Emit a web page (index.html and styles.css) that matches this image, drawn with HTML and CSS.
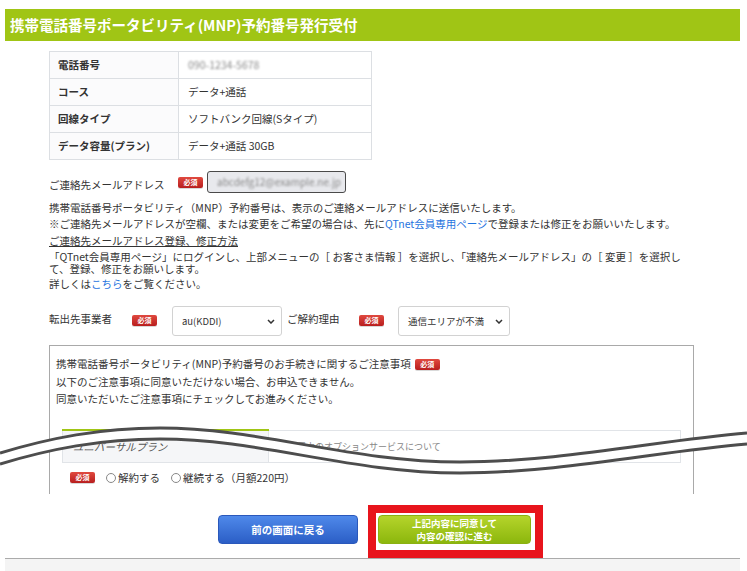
FILE: index.html
```html
<!DOCTYPE html>
<html lang="ja">
<head>
<meta charset="utf-8">
<title>携帯電話番号ポータビリティ(MNP)予約番号発行受付</title>
<link rel="stylesheet" href="styles.css">
</head>
<body>
<div class="page">
  <h1 class="titlebar">携帯電話番号ポータビリティ(MNP)予約番号発行受付</h1>
  <div class="content">
    <table class="info">
      <tr><th>電話番号</th><td><span class="blur">090-1234-5678</span></td></tr>
      <tr><th>コース</th><td>データ+通話</td></tr>
      <tr><th>回線タイプ</th><td>ソフトバンク回線(Sタイプ)</td></tr>
      <tr><th>データ容量(プラン)</th><td>データ+通話 30GB</td></tr>
    </table>

    <div class="email-row">
      <span class="email-label">ご連絡先メールアドレス</span>
      <span class="badge">必須</span>
      <div class="email-input"><span class="blur">abcdefg12@example.ne.jp</span></div>
    </div>

    <div class="note">
      <div class="note-line">携帯電話番号ポータビリティ（MNP）予約番号は、表示のご連絡メールアドレスに送信いたします。</div>
      <div class="note-line">※ご連絡先メールアドレスが空欄、または変更をご希望の場合は、先に<a class="link">QTnet会員専用ページ</a>で登録または修正をお願いいたします。</div>
    </div>

    <div class="howto">
      <div class="howto-title">ご連絡先メールアドレス登録、修正方法</div>
      <div class="howto-line">「QTnet会員専用ページ」にログインし、上部メニューの［ お客さま情報 ］を選択し、「連絡先メールアドレス」の［ 変更 ］を選択して、登録、修正をお願いします。</div>
      <div class="howto-line">詳しくは<a class="link">こちら</a>をご覧ください。</div>
    </div>

    <div class="select-row">
      <span class="field-label first">転出先事業者</span>
      <span class="badge">必須</span>
      <div class="select s1"><span>au(KDDI)</span><svg class="chev" viewBox="0 0 8 5"><path d="M1 1l3 3 3-3"/></svg></div>
      <span class="field-label second">ご解約理由</span>
      <span class="badge">必須</span>
      <div class="select s2"><span>通信エリアが不満</span><svg class="chev" viewBox="0 0 8 5"><path d="M1 1l3 3 3-3"/></svg></div>
    </div>

    <section class="notice">
      <p class="notice-title">携帯電話番号ポータビリティ(MNP)予約番号のお手続きに関するご注意事項<span class="badge">必須</span></p>
      <p class="notice-line">以下のご注意事項に同意いただけない場合、お申込できません。</p>
      <p class="notice-line">同意いただいたご注意事項にチェックしてお進みください。</p>
      <table class="plan">
        <tr><th>ユニバーサルプラン</th><td>ご利用中のオプションサービスについて</td></tr>
      </table>
      <div class="radios">
        <span class="badge">必須</span>
        <label class="radio"><span class="circle"></span>解約する</label>
        <label class="radio"><span class="circle"></span>継続する（月額220円）</label>
      </div>
    </section>

    <div class="buttons">
      <a class="btn btn-back">前の画面に戻る</a>
      <a class="btn btn-next">上記内容に同意して<br>内容の確認に進む</a>
    </div>
  </div>
  <div class="footer"></div>

  <svg class="wave" viewBox="0 0 747 571" width="747" height="571">
    <path class="wave-fill" d="M0,458.5 C50,443.5 100,433.5 160,433.5 C260,433.5 350,467.5 460,467.5 C560,467.5 660,445.5 747,438.5"/>
    <path class="wave-line" d="M0,453 C50,438 100,428 160,428 C260,428 350,462 460,462 C560,462 660,440 747,433"/>
    <path class="wave-line" d="M0,464 C50,449 100,439 160,439 C260,439 350,473 460,473 C560,473 660,451 747,444"/>
  </svg>
</div>
</body>
</html>
```

FILE: styles.css
```css
* { box-sizing: border-box; }

html, body {
  margin: 0;
  padding: 0;
  background: #fff;
}

body {
  font-family: "Noto Sans CJK JP", "Noto Sans", sans-serif;
  font-size: 10.5px;
  color: #333;
}

.page {
  position: relative;
  width: 747px;
  height: 571px;
  overflow: hidden;
}

.titlebar {
  margin: 9px 7px 0 5px;
  height: 32px;
  padding-left: 5px;
  background: #a0c515;
  color: #fff;
  font-size: 14.5px;
  font-weight: bold;
  line-height: 32px;
}

.content {
  padding-left: 49px;
  width: 700px;
}

/* info table */
.info {
  margin-top: 10px;
  border-collapse: collapse;
  width: 323px;
}
.info th,
.info td {
  border: 1px solid #dcdfe3;
  height: 27px;
  padding: 0 0 0 8px;
  text-align: left;
  font-size: 10.5px;
  line-height: 14px;
}
.info th {
  width: 129px;
  font-weight: bold;
  background: #fbfbfc;
}
.info td { padding-left: 9px; }

.blur {
  color: #8a8a8a;
  filter: blur(1.3px);
}

/* email */
.email-row {
  display: flex;
  align-items: center;
  margin-top: 11px;
  height: 22px;
}
.email-label {
  width: 129px;
  padding-top: 4px;
}
.email-input {
  margin-left: 4px;
  width: 139px;
  height: 22px;
  border: 1px solid #4a4a4a;
  border-radius: 3px;
  background: #e8e9ed;
  padding-left: 9px;
  line-height: 20px;
  font-size: 10px;
}

.badge {
  display: inline-block;
  width: 25px;
  height: 11px;
  border-radius: 2px;
  background: linear-gradient(#e0493f, #b81e1e);
  color: #fff;
  font-size: 7px;
  line-height: 11px;
  text-align: center;
  font-weight: bold;
  box-shadow: 0 1px 0 rgba(0,0,0,0.15);
}

.note {
  margin-top: 9px;
  display: flex;
  flex-direction: column;
  gap: 3.5px;
}
.note-line {
  line-height: 12px;
  white-space: nowrap;
}

.link {
  color: #1f74e0;
  text-decoration: none;
}

.howto {
  margin-top: 5.5px;
  width: 641px;
  display: flex;
  flex-direction: column;
  gap: 3.5px;
}
.howto-title,
.howto-line {
  line-height: 12px;
}
.howto-title {
  text-decoration: underline;
  text-underline-offset: 1px;
}

/* selects */
.select-row {
  display: flex;
  align-items: center;
  margin-top: 16px;
  height: 30px;
}
.field-label {
  margin-top: -6px;
}
.field-label.first { width: 83px; }
.field-label.second { width: 72px; margin-left: 5px; }
.select-row .badge { margin-top: -1px; }
.select {
  display: flex;
  align-items: center;
  justify-content: space-between;
  height: 30px;
  border: 1px solid #d2d2d2;
  border-radius: 3px;
  background: #fff;
  padding: 0 6px 0 9px;
  font-size: 9.5px;
}
.s1 { width: 110px; margin-left: 15px; }
.s2 { width: 112px; margin-left: 14px; }
.chev {
  width: 8px;
  height: 5px;
  fill: none;
  stroke: #333;
  stroke-width: 1.5;
}

/* notice */
.notice {
  margin-top: 9px;
  width: 645px;
  height: 149px;
  border: 1px solid #a9a9a9;
  border-bottom: none;
  padding: 9px 0 0 6px;
}
.notice p { margin: 0; }
.notice-title {
  line-height: 18px;
}
.notice-title .badge {
  margin-left: 4px;
  vertical-align: 1px;
}
.notice-line {
  line-height: 17px;
}

.plan {
  margin: 22px 0 0 6px;
  border-collapse: collapse;
  width: 619px;
}
.plan th,
.plan td {
  height: 32px;
  border: 1px solid #e1e4e8;
  text-align: left;
  font-weight: normal;
  padding: 0 0 0 10px;
  color: #555;
}
.plan th {
  width: 206px;
  background: #f5f6f8;
  border-top: 2px solid #a0c515;
  font-style: italic;
}
.plan td { font-size: 9px; color: #888; }

.radios {
  display: flex;
  align-items: center;
  margin: 8px 0 0 14px;
  height: 14px;
}
.radio {
  display: flex;
  align-items: center;
  margin-left: 11px;
}
.radio + .radio { margin-left: 11px; }
.circle {
  display: inline-block;
  width: 10px;
  height: 10px;
  border: 1px solid #888;
  border-radius: 50%;
  background: #fff;
  margin-right: 2px;
}

/* buttons */
.buttons {
  display: flex;
  gap: 20px;
  margin: 21px 0 0 169px;
}
.btn {
  display: flex;
  align-items: center;
  justify-content: center;
  height: 29px;
  border-radius: 4px;
  color: #fff;
  font-weight: bold;
  text-align: center;
}
.btn-back {
  width: 140px;
  background: linear-gradient(#4f89ea, #2b5ec6);
  border: 1px solid #2a58bb;
  font-size: 10.5px;
}
.btn-next {
  position: relative;
  width: 153px;
  background: linear-gradient(#b5d42b, #8cb70d);
  border: 1px solid #8bb112;
  font-size: 9.5px;
  line-height: 13px;
}
.btn-next::after {
  content: "";
  position: absolute;
  top: -11px;
  left: -11px;
  right: -13px;
  bottom: -15px;
  border: 8px solid #e8141c;
}

.footer {
  position: absolute;
  left: 5px;
  right: 7px;
  top: 558px;
  height: 13px;
  border-top: 1px solid #ababab;
  background: #f4f4f4;
}

.wave {
  position: absolute;
  top: 0;
  left: 0;
  pointer-events: none;
}
.wave-fill {
  fill: none;
  stroke: #fff;
  stroke-width: 10;
}
.wave-line {
  fill: none;
  stroke: #4d4d4d;
  stroke-width: 3;
}
```
